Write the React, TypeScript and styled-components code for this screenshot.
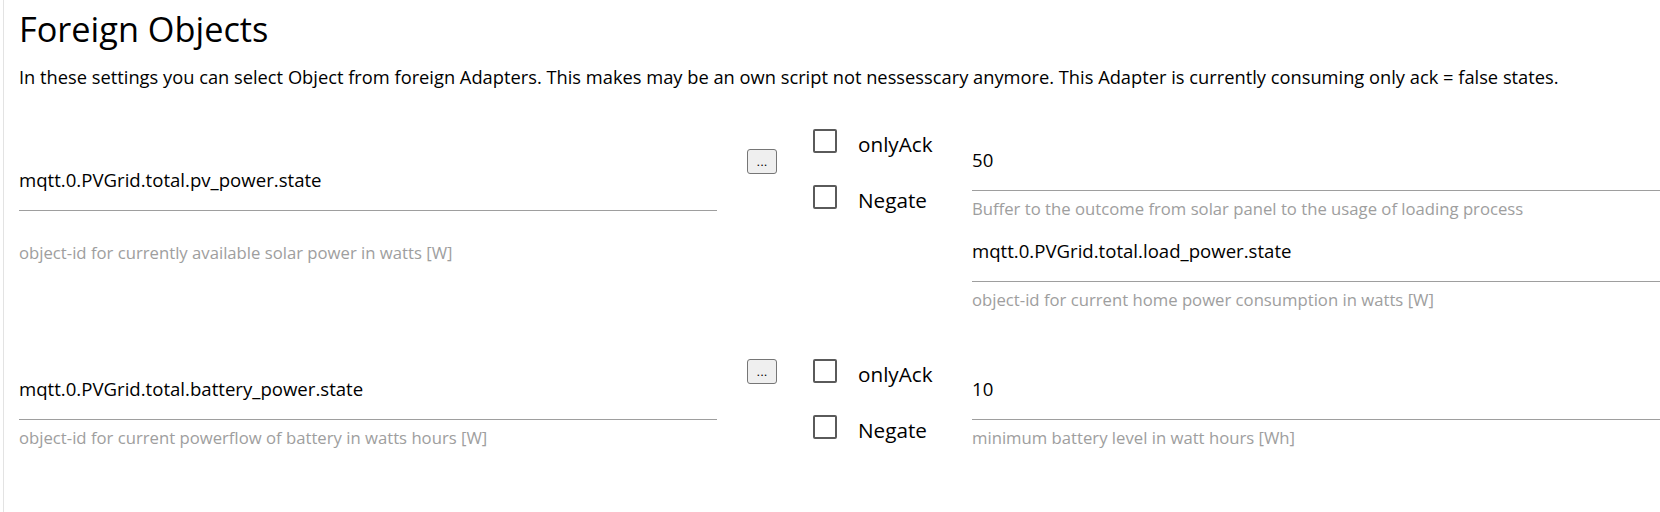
import React from "react";
import styled, { createGlobalStyle } from "styled-components";

const GlobalStyle = createGlobalStyle`
  html, body {
    margin: 0;
    padding: 0;
    background: #ffffff;
  }
  body {
    font-family: "Open Sans", "Noto Sans", Arial, sans-serif;
    color: #000000;
  }
`;

const Page = styled.div`
  margin-left: 3px;
  border-left: 1px solid #e3e3e3;
  padding-left: 15px;
  min-height: 512px;
  box-sizing: border-box;
`;

const Title = styled.h1`
  margin: 0;
  padding-top: 9px;
  font-size: 34.3px;
  line-height: 40px;
  font-weight: 400;
`;

const Description = styled.p`
  margin: 16px 0 0;
  font-size: 18.3px;
  line-height: 24px;
  white-space: nowrap;
`;

const Rows = styled.div`
  margin-top: 40px;
  display: flex;
  flex-direction: column;
  gap: 49px;
`;

const Row = styled.div`
  display: grid;
  grid-template-columns: 698px 96px 159px 1fr;
  align-items: start;
`;

const Cell = styled.div<{ $offset: number }>`
  margin-top: ${(p) => p.$offset}px;
  display: flex;
  flex-direction: column;
  gap: 21px;
`;

const PickButton = styled.button`
  margin-left: 30px;
  width: 30px;
  height: 25px;
  padding: 0;
  background: #efefef;
  border: 1px solid #767676;
  border-radius: 3px;
  font-family: Arial, sans-serif;
  font-size: 13px;
  line-height: 23px;
  color: #000;
`;

const Checks = styled.div`
  display: flex;
  flex-direction: column;
  gap: 32px;
`;

const CheckRow = styled.label`
  display: flex;
  align-items: flex-start;
  height: 24px;
  gap: 21px;
`;

const Box = styled.span`
  width: 24px;
  height: 24px;
  box-sizing: border-box;
  border: 2px solid #5a5a5a;
  border-radius: 2px;
`;

const CheckLabel = styled.span`
  padding-top: 3px;
  font-size: 20.7px;
  line-height: 24px;
`;

const Field = styled.div``;

const Value = styled.div`
  height: 42px;
  box-sizing: border-box;
  border-bottom: 1px solid #9e9e9e;
  font-size: 18.6px;
  line-height: 22px;
  white-space: nowrap;
`;

const Helper = styled.div<{ $gap: number }>`
  margin-top: ${(p) => p.$gap}px;
  font-size: 16.7px;
  line-height: 20px;
  color: #9e9e9e;
  white-space: nowrap;
`;

type FieldProps = { value: string; help: string; gap?: number };

function TextField({ value, help, gap = 8 }: FieldProps) {
  return (
    <Field>
      <Value>{value}</Value>
      <Helper $gap={gap}>{help}</Helper>
    </Field>
  );
}

function Check({ label }: { label: string }) {
  return (
    <CheckRow>
      <Box />
      <CheckLabel>{label}</CheckLabel>
    </CheckRow>
  );
}

export default function App() {
  return (
    <>
      <GlobalStyle />
      <Page>
        <Title>Foreign Objects</Title>
        <Description>
          In these settings you can select Object from foreign Adapters. This
          makes may be an own script not nessesscary anymore. This Adapter is
          currently consuming only ack = false states.
        </Description>
        <Rows>
          <Row>
            <Cell $offset={40}>
              <TextField
                value="mqtt.0.PVGrid.total.pv_power.state"
                help="object-id for currently available solar power in watts [W]"
                gap={32}
              />
            </Cell>
            <Cell $offset={20}>
              <PickButton>...</PickButton>
            </Cell>
            <Checks>
              <Check label="onlyAck" />
              <Check label="Negate" />
            </Checks>
            <Cell $offset={20}>
              <TextField
                value="50"
                help="Buffer to the outcome from solar panel to the usage of loading process"
              />
              <TextField
                value="mqtt.0.PVGrid.total.load_power.state"
                help="object-id for current home power consumption in watts [W]"
              />
            </Cell>
          </Row>
          <Row>
            <Cell $offset={19}>
              <TextField
                value="mqtt.0.PVGrid.total.battery_power.state"
                help="object-id for current powerflow of battery in watts hours [W]"
              />
            </Cell>
            <Cell $offset={0}>
              <PickButton>...</PickButton>
            </Cell>
            <Checks>
              <Check label="onlyAck" />
              <Check label="Negate" />
            </Checks>
            <Cell $offset={19}>
              <TextField
                value="10"
                help="minimum battery level in watt hours [Wh]"
              />
            </Cell>
          </Row>
        </Rows>
      </Page>
    </>
  );
}
